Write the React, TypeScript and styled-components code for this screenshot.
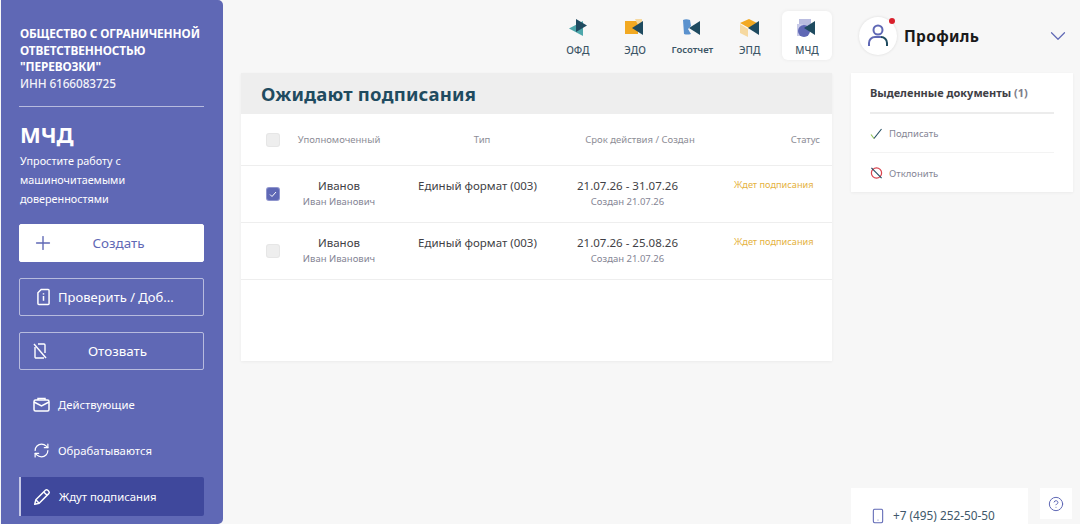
import styled, { createGlobalStyle } from "styled-components";
import { ChevronDown, CircleHelp, Plus, RefreshCw, Smartphone } from "lucide-react";
import { ReactNode } from "react";

const GlobalStyle = createGlobalStyle`
  html, body {
    margin: 0;
    height: 100%;
    overflow: hidden;
    background: #f7f7f7;
    font-family: "Noto Sans", "Open Sans", sans-serif;
  }
  * { box-sizing: border-box; }
`;

const Page = styled.div`
  display: flex;
  width: 1080px;
  height: 524px;
  overflow: hidden;
`;

const Sidebar = styled.aside`
  flex: 0 0 222px;
  height: 524px;
  margin-left: 1px;
  padding: 25px 19px 0 18px;
  background: #5f68b5;
  border-radius: 0 5px 5px 0;
  color: #fff;
`;

const Company = styled.div`
  padding: 0 0 15px 1px;
  font-size: 11.8px;
  line-height: 16.5px;
  font-weight: 700;
  text-transform: uppercase;
  letter-spacing: -0.1px;
  white-space: nowrap;
  border-bottom: 1px solid rgba(255, 255, 255, 0.55);
`;

const Inn = styled.div`
  font-weight: 500;
  opacity: 0.92;
`;

const ServiceTitle = styled.h1`
  margin: 12px 0 0 1px;
  font-size: 22px;
  line-height: 30px;
  font-weight: 700;
`;

const ServiceText = styled.p`
  margin: 2px 0 16px 1px;
  font-size: 10.8px;
  line-height: 19px;
`;

const ActionButton = styled.div<{ $primary?: boolean }>`
  display: flex;
  align-items: center;
  height: 38px;
  margin-bottom: 16px;
  padding: 0 13px 0 ${(p) => (p.$primary ? "12px" : "13px")};
  border-radius: 2px;
  font-size: 13.4px;
  background: ${(p) => (p.$primary ? "#fff" : "transparent")};
  border: 1px solid ${(p) => (p.$primary ? "#fff" : "rgba(255, 255, 255, 0.55)")};
  color: ${(p) => (p.$primary ? "#5f68b5" : "#fff")};
`;

const ActionLabel = styled.span<{ $shift: number }>`
  flex: 1;
  text-align: center;
  white-space: nowrap;
  padding-right: ${(p) => p.$shift}px;
`;

const CheckLabel = styled.span`
  margin-left: 8px;
  font-size: 13px;
  white-space: nowrap;
`;

const CheckFileSvg = styled.svg`
  margin-left: 4px;
`;

const SideList = styled.nav`
  display: flex;
  flex-direction: column;
`;

const SideItem = styled.div<{ $active?: boolean }>`
  display: flex;
  align-items: center;
  gap: 8px;
  height: ${(p) => (p.$active ? "39px" : "36px")};
  margin: ${(p) => (p.$active ? "-1px 0 0" : "0 0 10px")};
  padding-left: 12px;
  font-size: 11.3px;
  background: ${(p) => (p.$active ? "#3f489c" : "transparent")};
  border-left: 2px solid ${(p) => (p.$active ? "#c5c8e6" : "transparent")};
  border-radius: 0 2px 2px 0;
`;

const Main = styled.main`
  flex: 0 0 591px;
  margin-left: 18px;
`;

const TopNav = styled.div`
  display: flex;
  justify-content: flex-end;
  gap: 7.3px;
  height: 73px;
  padding-top: 11px;
`;

const NavItem = styled.div<{ $active?: boolean }>`
  display: flex;
  flex-direction: column;
  align-items: center;
  width: 50px;
  height: 49px;
  padding-top: 7px;
  border-radius: 6px;
  background: ${(p) => (p.$active ? "#fff" : "transparent")};
  box-shadow: ${(p) => (p.$active ? "0 0 4px rgba(0, 0, 0, 0.06)" : "none")};
`;

const NavLabel = styled.span<{ $small?: boolean }>`
  margin-top: 5px;
  font-size: ${(p) => (p.$small ? "9.5px" : "10px")};
  font-weight: ${(p) => (p.$small ? 600 : 500)};
  line-height: 14px;
  white-space: nowrap;
  color: #3c5566;
`;

const TableCard = styled.section`
  height: 288px;
  background: #fff;
  box-shadow: 0 1px 3px rgba(0, 0, 0, 0.05);
`;

const TitleBar = styled.div`
  display: flex;
  align-items: center;
  height: 41px;
  padding-left: 20px;
  background: #eeeeee;
  color: #1f4b60;
  font-size: 18.5px;
  font-weight: 700;
  letter-spacing: 0.22px;
`;

const Row = styled.div<{ $head?: boolean }>`
  display: grid;
  grid-template-columns: 55px 86px 200px 116px 134px;
  height: ${(p) => (p.$head ? "52px" : "57px")};
  align-items: ${(p) => (p.$head ? "center" : "start")};
  padding-top: ${(p) => (p.$head ? "0" : "12px")};
  border-bottom: 1px solid #eeeeee;
  text-align: center;
  white-space: nowrap;
`;

const CheckCell = styled.div<{ $head?: boolean }>`
  padding-left: 26px;
  padding-top: ${(p) => (p.$head ? "0" : "10px")};
`;

const Box = styled.div<{ $checked?: boolean }>`
  display: flex;
  align-items: center;
  justify-content: center;
  width: 12px;
  height: 12px;
  border-radius: 2px;
  background: ${(p) => (p.$checked ? "#5f68b5" : "#eeeeee")};
  box-shadow: 0 0 0 1px ${(p) => (p.$checked ? "#8f95cd" : "#e6e6e6")};
`;

const HeadCell = styled.div<{ $right?: boolean }>`
  font-size: 9.5px;
  color: #8d8d96;
  display: flex;
  justify-content: ${(p) => (p.$right ? "flex-end" : "center")};
  padding-right: ${(p) => (p.$right ? "12px" : "0")};
`;

const MainText = styled.div`
  font-size: 11.5px;
  line-height: 16px;
  color: #3f3f46;
  display: flex;
  justify-content: center;
`;

const SubText = styled.div`
  margin-top: 1px;
  font-size: 9.5px;
  line-height: 14px;
  color: #858595;
  display: flex;
  justify-content: center;
`;

// the body cells of these two columns sit left of their header's centre
const OffsetCell = styled.div<{ $offset: number }>`
  display: flex;
  flex-direction: column;
  align-items: center;
  padding-right: ${(p) => p.$offset}px;
`;

const StatusCell = styled.div`
  padding-left: 36px;
  text-align: left;
  font-size: 9.2px;
  line-height: 14px;
  color: #e5b23e;
`;

const Aside = styled.aside`
  display: flex;
  flex-direction: column;
  flex: 0 0 222px;
  height: 524px;
  margin-left: 19px;
`;

const Profile = styled.div`
  display: flex;
  align-items: center;
  height: 73px;
  padding: 0 2px 1px 8px;
`;

const Avatar = styled.div`
  position: relative;
  display: flex;
  align-items: center;
  justify-content: center;
  width: 38px;
  height: 38px;
  border-radius: 50%;
  background: #fff;
  box-shadow: 0 0 3px rgba(0, 0, 0, 0.12);
`;

const RedDot = styled.span`
  position: absolute;
  top: 1px;
  right: 2px;
  width: 6px;
  height: 6px;
  border-radius: 50%;
  background: #d9202c;
`;

const ProfileName = styled.div`
  flex: 1;
  margin-left: 7px;
  font-size: 15.5px;
  font-weight: 700;
  letter-spacing: 0.3px;
  color: #1a1a1a;
`;

const SelectedCard = styled.section`
  height: 119px;
  padding: 11px 19px 0;
  background: #fff;
  box-shadow: 0 1px 3px rgba(0, 0, 0, 0.05);
`;

const SelectedTitle = styled.div`
  height: 30px;
  font-size: 11px;
  line-height: 18px;
  font-weight: 700;
  color: #3f3f46;
  border-bottom: 2px solid #ececec;
  white-space: nowrap;
`;

const Count = styled.span`
  color: #7d7d8a;
`;

const SelectedAction = styled.div<{ $last?: boolean }>`
  display: flex;
  align-items: center;
  gap: 6px;
  height: 39px;
  padding-top: 1px;
  font-size: 9.5px;
  color: #858595;
  border-bottom: ${(p) => (p.$last ? "none" : "1px solid #f3f3f3")};
`;

const Footer = styled.div`
  display: flex;
  gap: 12px;
  height: 36px;
  margin-top: auto;
`;

const PhoneCard = styled.div`
  display: flex;
  align-items: flex-start;
  width: 177px;
  height: 50px;
  padding: 20px 0 0 19px;
  background: #fff;
  color: #5f68b5;
`;

const PhoneText = styled.span`
  margin-left: 7px;
  font-size: 11.8px;
  line-height: 15px;
  color: #40586a;
  white-space: nowrap;
`;

const HelpCard = styled.div`
  display: flex;
  align-items: center;
  justify-content: center;
  width: 32px;
  height: 31px;
  background: #fff;
  color: #5f68b5;
`;

const Dark = "#1f4b60";

const OfdLogo = () => (
  <svg width="22" height="20" viewBox="0 0 22 20">
    <path d="M16 3 2 10.5 16 18Z" fill="#4ea7ab" />
    <path d="M9 1v13l11-6.5Z" fill={Dark} />
  </svg>
);

const EdoLogo = () => (
  <svg width="22" height="20" viewBox="0 0 22 20">
    <rect x="1" y="3" width="13" height="13" fill="#f2a922" />
    <path d="M11 1h7v14z" fill="#f6d9a0" />
    <path d="M19 3v14L8 10Z" fill={Dark} />
  </svg>
);

const GosLogo = () => (
  <svg width="22" height="20" viewBox="0 0 22 20">
    <path d="M2 2q3-1.500 7 0l1 6-3 3 3 5q-4 1-7 0Z" fill="#5b92ce" />
    <path d="M19 3v14L8 10Z" fill={Dark} />
  </svg>
);

const EpdLogo = () => (
  <svg width="22" height="20" viewBox="0 0 22 20">
    <path d="M1 5l9-4 8 4-8 5Z" fill="#f2a922" />
    <path d="M1 6l8 5v8l-8-4Z" fill="#f6d9a0" />
    <path d="M20 3v14L9 10Z" fill={Dark} />
  </svg>
);

const MchdLogo = () => (
  <svg width="22" height="20" viewBox="0 0 22 20">
    <rect x="3" y="1" width="12" height="7" fill="#b9bce0" />
    <rect x="1" y="6" width="6" height="12" fill="#c8cae8" />
    <circle cx="8" cy="13" r="6" fill="#5f68b5" />
    <path d="M19 3v14L8 10Z" fill={Dark} />
  </svg>
);

const UserIcon = () => (
  <svg width="22" height="24" viewBox="0 0 22 24" fill="none" strokeWidth="2">
    <circle cx="11" cy="6" r="4.500" stroke="#5f68b5" />
    <path d="M2 22v-3a6 6 0 0 1 6-6h6" stroke="#5f68b5" />
    <path d="M14 13a6 6 0 0 1 6 6v3" stroke={Dark} />
  </svg>
);

const CheckFileIcon = () => (
  <CheckFileSvg width="13" height="18" viewBox="0 0 14 18" fill="none" stroke="#fff" strokeWidth="1.6">
    <path d="M4.500 1H12a1 1 0 0 1 1 1v14a1 1 0 0 1-1 1H2a1 1 0 0 1-1-1V4.500Z" />
    <path d="M7 8v5M7 5v1.300" />
  </CheckFileSvg>
);

const RevokeIcon = () => (
  <svg width="14" height="16" viewBox="0 0 14 16" fill="none" stroke="#fff" strokeWidth="1.4">
    <path d="M5 1h6a1 1 0 0 1 1 1v8M11 15H3a1 1 0 0 1-1-1V4" />
    <path d="M1 1l12 14" />
  </svg>
);

const CaseIcon = () => (
  <svg width="17" height="15" viewBox="0 0 17 15" fill="none" stroke="#fff" strokeWidth="1.5">
    <path d="M5 3V1.500h7V3" />
    <rect x="1" y="3" width="15" height="11" rx="1.500" />
    <path d="M1 5l7.500 4L16 5" />
  </svg>
);

const PenIcon = () => (
  <svg width="18" height="18" viewBox="0 0 16 16" fill="none" stroke="#fff" strokeWidth="1.3" strokeLinejoin="round">
    <path d="M1.500 14.500l1-4L11 2a1.500 1.500 0 0 1 2.100 0l.900.900a1.500 1.500 0 0 1 0 2.100L5.500 13.500Z" />
    <path d="M9.500 3.500l3 3M2.500 10.500l3 3" />
  </svg>
);

const SignIcon = () => (
  <svg width="13" height="12" viewBox="0 0 13 12" fill="none" strokeWidth="1.100">
    <path d="M1 6.500 4 10.500" stroke="#8cc152" />
    <path d="M4 10.500 11.500 1" stroke={Dark} />
  </svg>
);

const RejectIcon = () => (
  <svg width="13" height="14" viewBox="0 0 14 14" fill="none">
    <circle cx="7" cy="7" r="5.500" stroke="#d9434e" strokeWidth="1.300" />
    <path d="M1.500 1.500l11 11" stroke={Dark} strokeWidth="1.200" />
  </svg>
);

const navItems: { label: string; logo: ReactNode; small?: boolean; active?: boolean }[] = [
  { label: "ОФД", logo: <OfdLogo /> },
  { label: "ЭДО", logo: <EdoLogo /> },
  { label: "Госотчет", logo: <GosLogo />, small: true },
  { label: "ЭПД", logo: <EpdLogo /> },
  { label: "МЧД", logo: <MchdLogo />, active: true },
];

const rows = [
  { period: "21.07.26 - 31.07.26", checked: true },
  { period: "21.07.26 - 25.08.26", checked: false },
];

const App = () => {
  return (
    <Page>
      <GlobalStyle />
      <Sidebar>
        <Company>
          ОБЩЕСТВО С ОГРАНИЧЕННОЙ
          <br />
          ОТВЕТСТВЕННОСТЬЮ
          <br />
          "ПЕРЕВОЗКИ"
          <Inn>ИНН 6166083725</Inn>
        </Company>
        <ServiceTitle>МЧД</ServiceTitle>
        <ServiceText>
          Упростите работу с
          <br />
          машиночитаемыми
          <br />
          доверенностями
        </ServiceText>
        <ActionButton $primary>
          <Plus size={22} strokeWidth={1.5} />
          <ActionLabel $shift={7}>Создать</ActionLabel>
        </ActionButton>
        <ActionButton>
          <CheckFileIcon />
          <CheckLabel>Проверить / Доб...</CheckLabel>
        </ActionButton>
        <ActionButton>
          <RevokeIcon />
          <ActionLabel $shift={2}>Отозвать</ActionLabel>
        </ActionButton>
        <SideList>
          <SideItem>
            <CaseIcon />
            Действующие
          </SideItem>
          <SideItem>
            <RefreshCw size={17} strokeWidth={1.7} />
            Обрабатываются
          </SideItem>
          <SideItem $active>
            <PenIcon />
            Ждут подписания
          </SideItem>
        </SideList>
      </Sidebar>

      <Main>
        <TopNav>
          {navItems.map((item) => (
            <NavItem key={item.label} $active={item.active}>
              {item.logo}
              <NavLabel $small={item.small}>{item.label}</NavLabel>
            </NavItem>
          ))}
        </TopNav>
        <TableCard>
          <TitleBar>Ожидают подписания</TitleBar>
          <Row $head>
            <CheckCell $head>
              <Box />
            </CheckCell>
            <HeadCell>Уполномоченный</HeadCell>
            <HeadCell>Тип</HeadCell>
            <HeadCell>Срок действия / Создан</HeadCell>
            <HeadCell $right>Статус</HeadCell>
          </Row>
          {rows.map((row) => (
            <Row key={row.period}>
              <CheckCell>
                <Box $checked={row.checked}>
                  {row.checked && (
                    <svg width="8" height="7" viewBox="0 0 8 7" fill="none" stroke="#fff" strokeWidth="1">
                      <path d="M1 3.500 3 5.500 7 1" />
                    </svg>
                  )}
                </Box>
              </CheckCell>
              <div>
                <MainText>Иванов</MainText>
                <SubText>Иван Иванович</SubText>
              </div>
              <OffsetCell $offset={9}>
                <MainText>Единый формат (003)</MainText>
              </OffsetCell>
              <OffsetCell $offset={25}>
                <MainText>{row.period}</MainText>
                <SubText>Создан 21.07.26</SubText>
              </OffsetCell>
              <StatusCell>Ждет подписания</StatusCell>
            </Row>
          ))}
        </TableCard>
      </Main>

      <Aside>
        <Profile>
          <Avatar>
            <UserIcon />
            <RedDot />
          </Avatar>
          <ProfileName>Профиль</ProfileName>
          <ChevronDown size={26} strokeWidth={1.1} color="#5f68b5" />
        </Profile>
        <SelectedCard>
          <SelectedTitle>
            Выделенные документы <Count>(1)</Count>
          </SelectedTitle>
          <SelectedAction>
            <SignIcon />
            Подписать
          </SelectedAction>
          <SelectedAction $last>
            <RejectIcon />
            Отклонить
          </SelectedAction>
        </SelectedCard>
        <Footer>
          <PhoneCard>
            <Smartphone size={16} strokeWidth={1.6} />
            <PhoneText>+7 (495) 252-50-50</PhoneText>
          </PhoneCard>
          <HelpCard>
            <CircleHelp size={16} strokeWidth={1.5} />
          </HelpCard>
        </Footer>
      </Aside>
    </Page>
  );
};

export default App;
